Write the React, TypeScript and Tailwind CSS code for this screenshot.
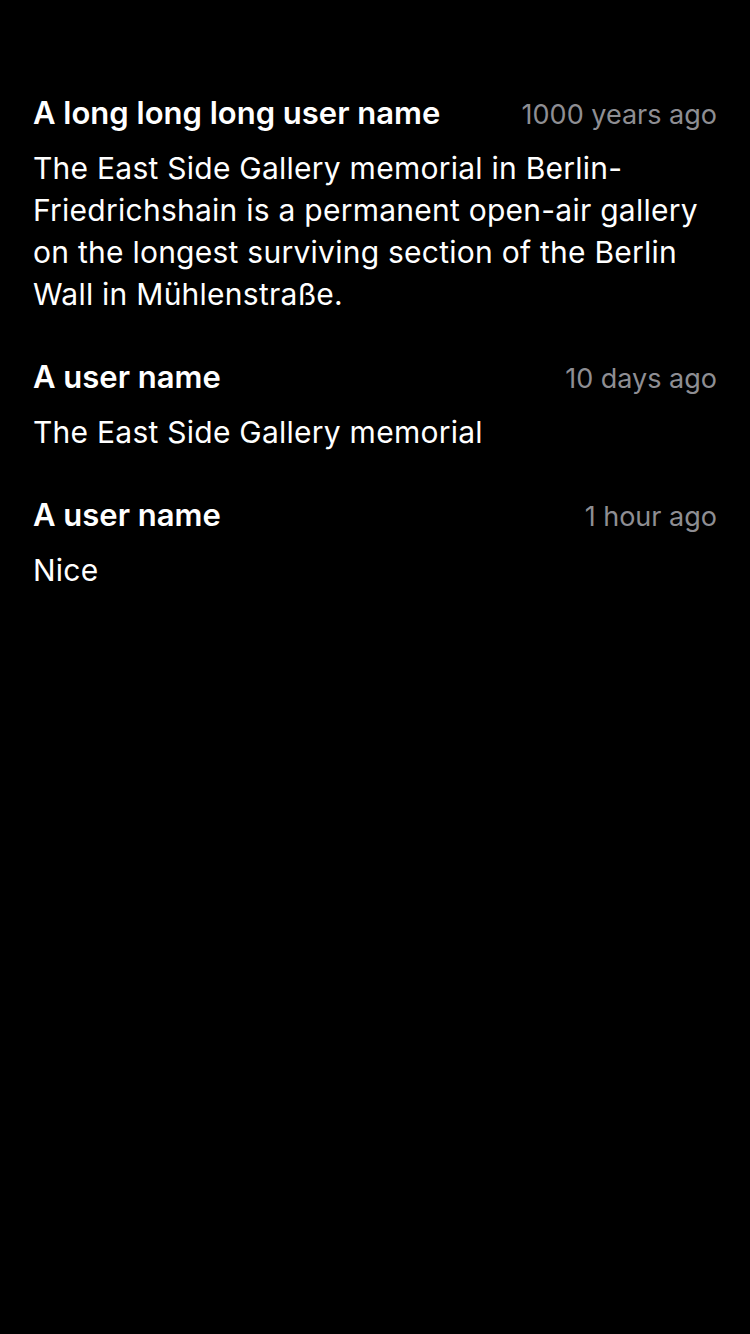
const comments = [
  {
    id: 1,
    user: 'A long long long user name',
    time: '1000 years ago',
    body: 'The East Side Gallery memorial in Berlin-Friedrichshain is a permanent open-air gallery on the longest surviving section of the Berlin Wall in Mühlenstraße.',
  },
  { id: 2, user: 'A user name', time: '10 days ago', body: 'The East Side Gallery memorial' },
  { id: 3, user: 'A user name', time: '1 hour ago', body: 'Nice' },
]

export default function App() {
  return (
    <div
      className="min-h-[1334px] w-[750px] bg-black px-[33px] pt-[95px] text-white"
      style={{ fontFamily: 'Inter, "Noto Sans", sans-serif' }}
    >
      <div className="flex flex-col gap-[44px]">
        {comments.map((c) => (
          <div key={c.id} className="flex flex-col gap-[14px]">
            <div className="flex items-baseline justify-between gap-4">
              <span className="truncate text-[31px] font-semibold leading-[36px]">{c.user}</span>
              <span className="shrink-0 text-[27px] leading-[36px] text-[#8e8e93]">{c.time}</span>
            </div>
            <p className="text-[30px] leading-[42px] tracking-[0.25px]">{c.body}</p>
          </div>
        ))}
      </div>
    </div>
  )
}
